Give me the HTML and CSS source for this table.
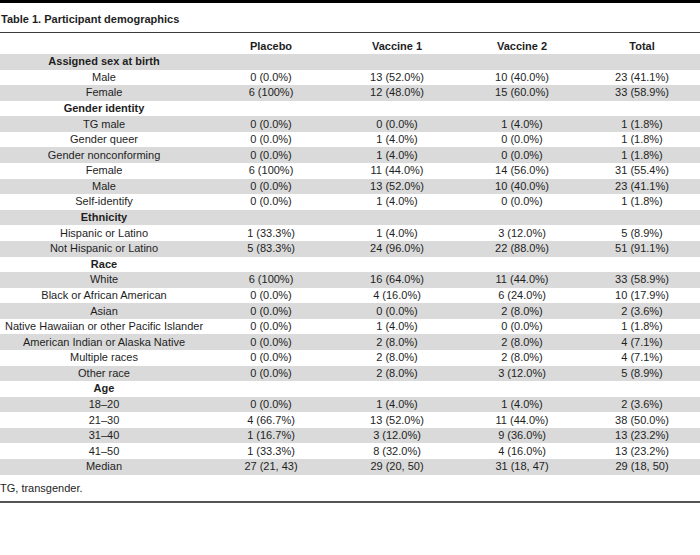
FILE: index.html
```html
<!DOCTYPE html>
<html>
<head>
<meta charset="utf-8">
<link rel="stylesheet" href="styles.css">
</head>
<body>
<div class="topbar"></div>
<div class="title">Table 1. Participant demographics</div>
<table class="demo">
<colgroup><col class="c0"><col class="c1"><col class="c2"><col class="c3"><col class="c4"></colgroup>
<thead>
<tr class="head"><th></th><th>Placebo</th><th>Vaccine 1</th><th>Vaccine 2</th><th>Total</th></tr>
</thead>
<tbody>
<tr class="g"><td class="grp">Assigned sex at birth</td><td></td><td></td><td></td><td></td></tr>
<tr><td>Male</td><td>0 (0.0%)</td><td>13 (52.0%)</td><td>10 (40.0%)</td><td>23 (41.1%)</td></tr>
<tr class="g"><td>Female</td><td>6 (100%)</td><td>12 (48.0%)</td><td>15 (60.0%)</td><td>33 (58.9%)</td></tr>
<tr><td class="grp">Gender identity</td><td></td><td></td><td></td><td></td></tr>
<tr class="g"><td>TG male</td><td>0 (0.0%)</td><td>0 (0.0%)</td><td>1 (4.0%)</td><td>1 (1.8%)</td></tr>
<tr><td>Gender queer</td><td>0 (0.0%)</td><td>1 (4.0%)</td><td>0 (0.0%)</td><td>1 (1.8%)</td></tr>
<tr class="g"><td>Gender nonconforming</td><td>0 (0.0%)</td><td>1 (4.0%)</td><td>0 (0.0%)</td><td>1 (1.8%)</td></tr>
<tr><td>Female</td><td>6 (100%)</td><td>11 (44.0%)</td><td>14 (56.0%)</td><td>31 (55.4%)</td></tr>
<tr class="g"><td>Male</td><td>0 (0.0%)</td><td>13 (52.0%)</td><td>10 (40.0%)</td><td>23 (41.1%)</td></tr>
<tr><td>Self-identify</td><td>0 (0.0%)</td><td>1 (4.0%)</td><td>0 (0.0%)</td><td>1 (1.8%)</td></tr>
<tr class="g"><td class="grp">Ethnicity</td><td></td><td></td><td></td><td></td></tr>
<tr><td>Hispanic or Latino</td><td>1 (33.3%)</td><td>1 (4.0%)</td><td>3 (12.0%)</td><td>5 (8.9%)</td></tr>
<tr class="g"><td>Not Hispanic or Latino</td><td>5 (83.3%)</td><td>24 (96.0%)</td><td>22 (88.0%)</td><td>51 (91.1%)</td></tr>
<tr><td class="grp">Race</td><td></td><td></td><td></td><td></td></tr>
<tr class="g"><td>White</td><td>6 (100%)</td><td>16 (64.0%)</td><td>11 (44.0%)</td><td>33 (58.9%)</td></tr>
<tr><td>Black or African American</td><td>0 (0.0%)</td><td>4 (16.0%)</td><td>6 (24.0%)</td><td>10 (17.9%)</td></tr>
<tr class="g"><td>Asian</td><td>0 (0.0%)</td><td>0 (0.0%)</td><td>2 (8.0%)</td><td>2 (3.6%)</td></tr>
<tr><td>Native Hawaiian or other Pacific Islander</td><td>0 (0.0%)</td><td>1 (4.0%)</td><td>0 (0.0%)</td><td>1 (1.8%)</td></tr>
<tr class="g"><td>American Indian or Alaska Native</td><td>0 (0.0%)</td><td>2 (8.0%)</td><td>2 (8.0%)</td><td>4 (7.1%)</td></tr>
<tr><td>Multiple races</td><td>0 (0.0%)</td><td>2 (8.0%)</td><td>2 (8.0%)</td><td>4 (7.1%)</td></tr>
<tr class="g"><td>Other race</td><td>0 (0.0%)</td><td>2 (8.0%)</td><td>3 (12.0%)</td><td>5 (8.9%)</td></tr>
<tr><td class="grp">Age</td><td></td><td></td><td></td><td></td></tr>
<tr class="g"><td>18–20</td><td>0 (0.0%)</td><td>1 (4.0%)</td><td>1 (4.0%)</td><td>2 (3.6%)</td></tr>
<tr><td>21–30</td><td>4 (66.7%)</td><td>13 (52.0%)</td><td>11 (44.0%)</td><td>38 (50.0%)</td></tr>
<tr class="g"><td>31–40</td><td>1 (16.7%)</td><td>3 (12.0%)</td><td>9 (36.0%)</td><td>13 (23.2%)</td></tr>
<tr><td>41–50</td><td>1 (33.3%)</td><td>8 (32.0%)</td><td>4 (16.0%)</td><td>13 (23.2%)</td></tr>
<tr class="g"><td>Median</td><td>27 (21, 43)</td><td>29 (20, 50)</td><td>31 (18, 47)</td><td>29 (18, 50)</td></tr>
</tbody>
</table>
<div class="foot">TG, transgender.</div>
</body>
</html>
```

FILE: styles.css
```css
html, body {
  margin: 0;
  padding: 0;
  background: #ffffff;
}
body {
  width: 700px;
  font-family: "Liberation Sans", Arial, sans-serif;
  font-size: 11px;
  color: #1e1e1e;
}
.topbar {
  height: 3px;
  background: #000000;
}
.title {
  font-weight: bold;
  line-height: 13px;
  padding: 10px 0 6px 1px;
  border-bottom: 1px solid #3a3a3a;
}
.demo {
  width: 700px;
  border-collapse: collapse;
  table-layout: fixed;
}
.c0 { width: 208px; }
.c1 { width: 126px; }
.c2 { width: 126px; }
.c3 { width: 124px; }
.c4 { width: 116px; }
.demo th,
.demo td {
  padding: 0;
  text-align: center;
  white-space: nowrap;
  line-height: 13px;
}
.head th {
  font-weight: bold;
  height: 21px;
  padding-top: 5px;
  box-sizing: border-box;
  vertical-align: middle;
}
.demo td {
  height: 15.58px;
  vertical-align: middle;
}
.demo tr.g td {
  background: #dadada;
}
.grp {
  font-weight: bold;
}
.foot {
  line-height: 13px;
  padding: 7px 0 6px 0;
  border-bottom: 2px solid #555555;
}
```
